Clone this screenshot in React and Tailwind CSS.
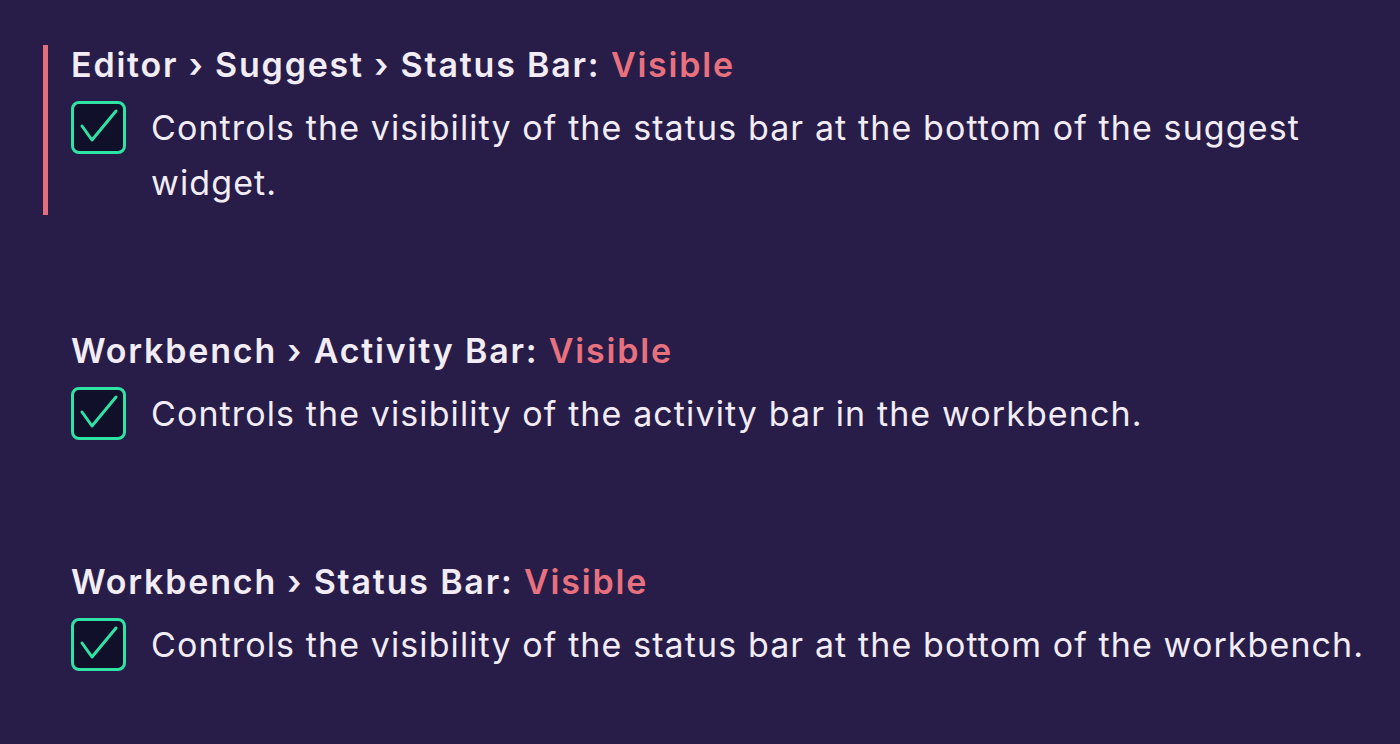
import React from 'react'

const settings = [
  {
    path: ['Editor', 'Suggest', 'Status Bar'],
    value: 'Visible',
    description: 'Controls the visibility of the status bar at the bottom of the suggest widget.',
    focused: true,
  },
  {
    path: ['Workbench', 'Activity Bar'],
    value: 'Visible',
    description: 'Controls the visibility of the activity bar in the workbench.',
  },
  {
    path: ['Workbench', 'Status Bar'],
    value: 'Visible',
    description: 'Controls the visibility of the status bar at the bottom of the workbench.',
  },
]

function Checkbox() {
  return (
    <div className="mt-[1px] h-[53px] w-[55px] shrink-0 rounded-[8px] border-[3px] border-[#2ee3a3] bg-[#10102a]">
      <svg viewBox="0 0 49 47" className="h-full w-full">
        <path d="M8 22 L18 36 L42 7" fill="none" stroke="#2ee3a3" strokeWidth="3" strokeLinecap="round" strokeLinejoin="round" />
      </svg>
    </div>
  )
}

function SettingItem({ path, value, description, focused }) {
  return (
    <div
      className={
        'flex flex-col gap-[15px] border-l-[5px] pb-[5px] pl-[23px] ' +
        (focused ? 'border-[#e36e7d]' : 'border-transparent')
      }
    >
      <div className="text-[34px] font-semibold leading-[40px] tracking-[1.8px] text-[#f2ecf6]">
        {path.join(' › ')}: <span className="text-[#e8717f]">{value}</span>
      </div>
      <div className="flex items-start gap-[25px]">
        <Checkbox />
        <p className="text-[34px] leading-[55px] tracking-[1.1px] text-[#f2ecf6]">{description}</p>
      </div>
    </div>
  )
}

export default function App() {
  return (
    <div
      className="h-[744px] overflow-hidden bg-[#281d48] pl-[43px] pr-[20px] pt-[45px]"
      style={{ fontFamily: 'Inter, "Noto Sans", sans-serif' }}
    >
      <div className="flex flex-col gap-[116px]">
        {settings.map((s, i) => (
          <SettingItem key={i} {...s} />
        ))}
      </div>
    </div>
  )
}
